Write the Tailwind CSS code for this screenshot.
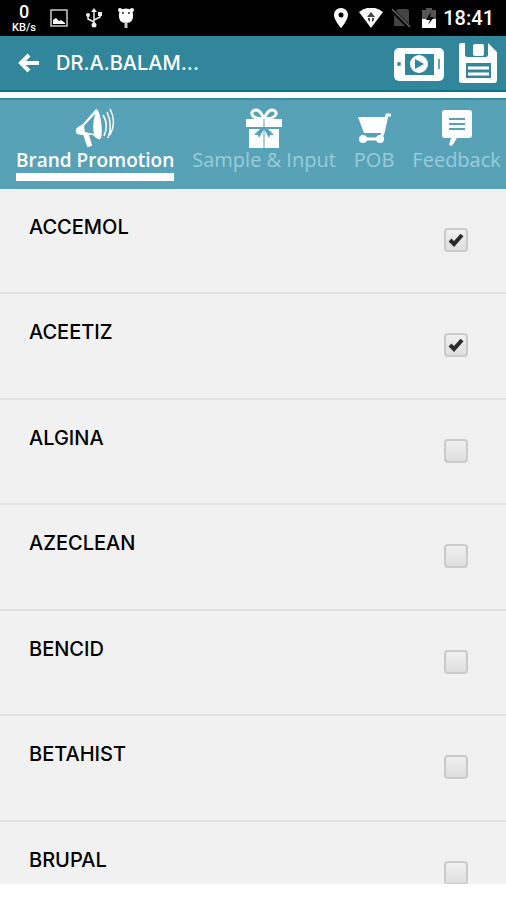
<!DOCTYPE html>
<html lang="en">
<head>
    <meta charset="UTF-8">
    <meta name="viewport" content="width=device-width, initial-scale=1.0">
    <title>Brand Promotion</title>
    <script src="https://cdn.jsdelivr.net/npm/@tailwindcss/browser@4"></script>
</head>
<body class="bg-white h-screen flex flex-col overflow-hidden font-['Inter',sans-serif]">
    <!-- Status bar -->
    <div class="h-9 shrink-0 bg-black text-white flex items-center justify-between px-3 font-['Roboto',sans-serif]">
        <div class="flex items-center gap-4">
            <div class="w-6 flex flex-col items-center font-medium">
                <span class="text-lg leading-5">0</span>
                <span class="text-[11px] leading-3">KB/s</span>
            </div>
            <svg class="w-5 h-5 -ml-1" viewBox="0 0 20 20" fill="none">
                <rect x="3" y="2" width="16" height="16" stroke="#ccc" stroke-width="1.5"/>
                <path d="M5 16v-4l3-2 3 3 2-1 4 3v1z" fill="#fff"/>
            </svg>
            <svg class="w-5 h-5" viewBox="0 0 20 20" fill="none" stroke="#eee" stroke-width="1.5">
                <path d="M10 3v14M10 14L4 11V7M10 12l6-3V5"/>
                <path d="M10 0l3 4H7z" fill="#eee" stroke="none"/>
                <circle cx="10" cy="17" r="2.5" fill="#eee" stroke="none"/>
                <circle cx="4" cy="7" r="2" fill="#eee" stroke="none"/>
                <path d="M14 4h4v4h-4z" fill="#eee" stroke="none"/>
            </svg>
            <svg class="w-5 h-6 -ml-1" viewBox="0 0 20 24">
                <circle cx="4" cy="4" r="2" fill="#fff"/><circle cx="16" cy="4" r="2" fill="#fff"/>
                <path d="M4 4q6-3 12 0l1 4q1 9-7 9T3 8z" fill="#fff"/>
                <path d="M10 16v6" stroke="#ccc" stroke-width="3"/>
                <circle cx="7" cy="7" r="1" fill="#222"/><circle cx="13" cy="7" r="1" fill="#222"/>
            </svg>
        </div>
        <div class="flex items-center">
            <svg class="w-4 h-5 mr-2.5" viewBox="0 0 16 20">
                <path fill="#fff" fill-rule="evenodd" d="M8 0C4 0 1 3 1 7c0 5 7 13 7 13s7-8 7-13c0-4-3-7-7-7zm0 4.500a2.500 2.500 0 1 1 0 5 2.500 2.500 0 0 1 0-5z"/>
            </svg>
            <svg class="w-6 h-5 mr-2" viewBox="0 0 24 20">
                <path fill="#fff" d="M0 4Q12-5 24 4L12 20z"/>
                <path fill="#444" d="M12 4l4 5H8zM9 10h2v4l-2-2zM13 10h2v2l-2 2z"/>
            </svg>
            <svg class="w-5 h-5 mr-2" viewBox="0 0 20 20">
                <path fill="#444" d="M7 1h9q2 0 2 2v15H3V5z"/>
                <path d="M0 1l18 18" stroke="#000" stroke-width="4"/>
                <path d="M1 1l18 18" stroke="#666" stroke-width="1.500"/>
            </svg>
            <svg class="w-5 h-6 mr-1" viewBox="0 0 20 24">
                <path fill="#555" d="M7 2h6v2h4v10H3V4h4z"/>
                <path fill="#fff" d="M3 13h14v9H3z"/>
                <path fill="#000" d="M12 6l-5 8h4l-2 5 6-8h-4z"/>
            </svg>
            <span class="text-xl font-medium leading-6">18:41</span>
        </div>
    </div>

    <!-- Title bar -->
    <header class="h-14 shrink-0 bg-[#32869b] border-b-2 border-[#08738c] text-white flex items-center pl-4 pr-2">
        <button aria-label="Back" class="mr-4">
            <svg class="w-6 h-6" viewBox="0 0 24 24" fill="none" stroke="#fff" stroke-width="4">
                <path d="M13 4l-8 8 8 8M5 12h18"/>
            </svg>
        </button>
        <h1 class="flex-1 text-xl font-medium leading-6">DR.A.BALAM...</h1>
        <button aria-label="Play presentation" class="mr-3.5">
            <svg class="w-[50px] h-9" viewBox="0 0 50 36">
                <rect y="3" width="50" height="33" rx="5" fill="#fff"/>
                <rect x="11" y="9" width="29" height="21" fill="#32869b"/>
                <circle cx="25" cy="19" r="9" fill="#fff"/>
                <path d="M21 14l9 5-9 5z" fill="#32869b"/>
                <circle cx="5" cy="19" r="2" fill="#32869b"/>
                <path d="M45 14v10" stroke="#32869b" stroke-width="1.500"/>
            </svg>
        </button>
        <button aria-label="Save">
            <svg class="w-10 h-10" viewBox="0 0 40 40">
                <path fill="#fff" d="M3 0h4v11q0 3 3 3h17q3 0 3-3V0l9 9v28q0 3-3 3H4q-3 0-3-3V3q0-3 2-3z"/>
                <path fill="#32869b" d="M7 0h23v10q0 4-3 4H10q-3 0-3-4z"/>
                <rect x="15" y="1" width="11" height="12" rx="2" fill="#fff"/>
                <path fill="#32869b" d="M8 20h25v15H8z"/>
                <path stroke="#fff" stroke-width="3" d="M10 25h21M10 31h21"/>
            </svg>
        </button>
    </header>

    <!-- Tabs -->
    <nav class="h-[91px] mt-1.5 shrink-0 bg-[#58a2b7] border-t-2 border-[#398da2] pt-2 pl-4 flex items-start gap-[18px] overflow-hidden whitespace-nowrap text-xl leading-6 text-[#9accd9] font-['Open_Sans',sans-serif]">
        <a href="#brand" class="flex flex-col items-center text-white text-[19px] leading-6 font-semibold">
            <svg class="w-10 h-10" viewBox="0 0 40 40" fill="none" stroke="#fff">
                <path fill="#fff" stroke="none" fill-rule="evenodd" d="M21 1c5 0 8 28 4 30-2 1-5-2-7-4L7 27 2 26Q-1 22 3 19l5-3zM20 6L9 18l1 6 9 2q-2-8 1-20z"/>
                <path d="M9 26l4 12 3-1-3-10" stroke-width="2" fill="#fff"/>
                <path d="M28 7q6 9 1 21M32 4q6 13 1 26M35 1q7 13 0 26" stroke-width="1.500"/>
            </svg>
            <span>Brand Promotion</span>
            <span class="w-full h-2 mt-px bg-white"></span>
        </a>
        <a href="#sample" class="flex flex-col items-center">
            <svg class="w-10 h-10" viewBox="0 0 40 40">
                <path fill="none" stroke="#fff" stroke-width="3" d="M20 11C5 11 6 2 12 2c5 0 8 9 8 9s3-9 8-9c6 0 7 9-8 9z"/>
                <path fill="#fff" d="M2 11h36v8H2zM5 21h30v19H5z"/>
                <path stroke="#58a2b7" d="M20 11v29"/>
                <path fill="#58a2b7" d="M18 19l-8 8 4 0 1 3 5-9zM22 19l8 8-4 0-1 3-5-9z"/>
            </svg>
            <span>Sample &amp; Input</span>
        </a>
        <a href="#pob" class="flex flex-col items-center">
            <svg class="w-10 h-10" viewBox="0 0 40 40" fill="none" stroke="#fff">
                <path fill="#fff" stroke="none" d="M4 9h27l-2 16H10z"/>
                <path stroke-width="3" d="M37 7h-4l-4 18-3 6H9"/>
                <circle cx="9" cy="31" r="4" fill="#fff" stroke="none"/>
                <circle cx="26" cy="31" r="4" fill="#fff" stroke="none"/>
            </svg>
            <span>POB</span>
        </a>
        <a href="#feedback" class="flex flex-col items-center">
            <svg class="w-10 h-10" viewBox="0 0 40 40">
                <path fill="#fff" d="M8 2h24q3 0 3 3v22q0 3-3 3H20l-5 8-3-1 2-7H8q-3 0-3-3V5q0-3 3-3z"/>
                <path stroke="#58a2b7" stroke-width="2" d="M12 11h16M12 16h16M12 21h16"/>
            </svg>
            <span>Feedback</span>
        </a>
    </nav>

    <!-- Brand list -->
    <main class="flex-1 min-h-0 mb-4 bg-[#f1f1f1] flex flex-col overflow-hidden text-xl leading-6 font-medium text-black">
        <label class="grow-5 basis-0 min-h-0 flex items-start justify-between pl-[29px] pr-[38px] border-b-2 border-[#e2e2e2]">
            <span class="mt-[26px]">ACCEMOL</span>
            <span class="relative mt-[39px] size-6">
                <input type="checkbox" checked class="peer block appearance-none size-6 rounded-sm border-2 border-[#cbcbcb] bg-linear-to-b from-[#f0f0f0] to-[#dedede]">
                <svg class="hidden peer-checked:block absolute inset-0 size-6" viewBox="0 0 24 24"><path d="M6 12l4 4 8-9" fill="none" stroke="#2b2b2b" stroke-width="4"/></svg>
            </span>
        </label>
        <label class="grow-5 basis-0 min-h-0 flex items-start justify-between pl-[29px] pr-[38px] border-b-2 border-[#e2e2e2]">
            <span class="mt-[26px]">ACEETIZ</span>
            <span class="relative mt-[39px] size-6">
                <input type="checkbox" checked class="peer block appearance-none size-6 rounded-sm border-2 border-[#cbcbcb] bg-linear-to-b from-[#f0f0f0] to-[#dedede]">
                <svg class="hidden peer-checked:block absolute inset-0 size-6" viewBox="0 0 24 24"><path d="M6 12l4 4 8-9" fill="none" stroke="#2b2b2b" stroke-width="4"/></svg>
            </span>
        </label>
        <label class="grow-5 basis-0 min-h-0 flex items-start justify-between pl-[29px] pr-[38px] border-b-2 border-[#e2e2e2]">
            <span class="mt-[26px]">ALGINA</span>
            <span class="relative mt-[39px] size-6">
                <input type="checkbox" class="peer block appearance-none size-6 rounded-sm border-2 border-[#cbcbcb] bg-linear-to-b from-[#f0f0f0] to-[#dedede]">
                <svg class="hidden peer-checked:block absolute inset-0 size-6" viewBox="0 0 24 24"><path d="M6 12l4 4 8-9" fill="none" stroke="#2b2b2b" stroke-width="4"/></svg>
            </span>
        </label>
        <label class="grow-5 basis-0 min-h-0 flex items-start justify-between pl-[29px] pr-[38px] border-b-2 border-[#e2e2e2]">
            <span class="mt-[26px]">AZECLEAN</span>
            <span class="relative mt-[39px] size-6">
                <input type="checkbox" class="peer block appearance-none size-6 rounded-sm border-2 border-[#cbcbcb] bg-linear-to-b from-[#f0f0f0] to-[#dedede]">
                <svg class="hidden peer-checked:block absolute inset-0 size-6" viewBox="0 0 24 24"><path d="M6 12l4 4 8-9" fill="none" stroke="#2b2b2b" stroke-width="4"/></svg>
            </span>
        </label>
        <label class="grow-5 basis-0 min-h-0 flex items-start justify-between pl-[29px] pr-[38px] border-b-2 border-[#e2e2e2]">
            <span class="mt-[26px]">BENCID</span>
            <span class="relative mt-[39px] size-6">
                <input type="checkbox" class="peer block appearance-none size-6 rounded-sm border-2 border-[#cbcbcb] bg-linear-to-b from-[#f0f0f0] to-[#dedede]">
                <svg class="hidden peer-checked:block absolute inset-0 size-6" viewBox="0 0 24 24"><path d="M6 12l4 4 8-9" fill="none" stroke="#2b2b2b" stroke-width="4"/></svg>
            </span>
        </label>
        <label class="grow-5 basis-0 min-h-0 flex items-start justify-between pl-[29px] pr-[38px] border-b-2 border-[#e2e2e2]">
            <span class="mt-[26px]">BETAHIST</span>
            <span class="relative mt-[39px] size-6">
                <input type="checkbox" class="peer block appearance-none size-6 rounded-sm border-2 border-[#cbcbcb] bg-linear-to-b from-[#f0f0f0] to-[#dedede]">
                <svg class="hidden peer-checked:block absolute inset-0 size-6" viewBox="0 0 24 24"><path d="M6 12l4 4 8-9" fill="none" stroke="#2b2b2b" stroke-width="4"/></svg>
            </span>
        </label>
        <label class="grow-3 basis-0 min-h-0 flex items-start justify-between pl-[29px] pr-[38px]">
            <span class="mt-[26px]">BRUPAL</span>
            <span class="relative mt-[39px] size-6">
                <input type="checkbox" class="peer block appearance-none size-6 rounded-sm border-2 border-[#cbcbcb] bg-linear-to-b from-[#f0f0f0] to-[#dedede]">
                <svg class="hidden peer-checked:block absolute inset-0 size-6" viewBox="0 0 24 24"><path d="M6 12l4 4 8-9" fill="none" stroke="#2b2b2b" stroke-width="4"/></svg>
            </span>
        </label>
    </main>
</body>
</html>
